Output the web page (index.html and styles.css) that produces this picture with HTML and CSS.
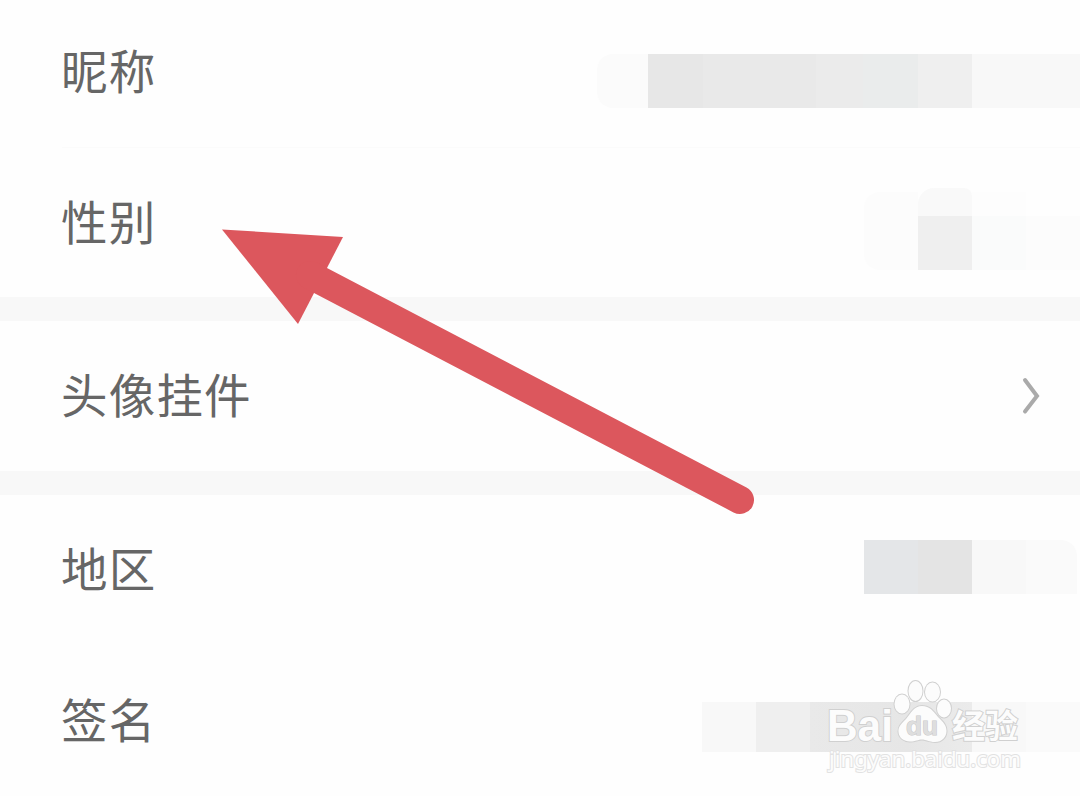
FILE: index.html
```html
<!DOCTYPE html>
<html lang="zh-CN">

<head>
  <meta charset="UTF-8" />
  <meta name="viewport" content="width=device-width, initial-scale=1.0" />
  <title>个人资料</title>
  <link rel="stylesheet" href="styles.css">
</head>

<body>
  <div class="profile">
    <div class="group">
      <div class="row row-nickname">
        <span class="label">昵称</span>
        <div class="mosaic">
          <i class="block edge wide"></i>
          <i class="block name"></i>
          <i class="block light"></i>
          <i class="block light"></i>
        </div>
      </div>
      <div class="row row-gender">
        <span class="label">性别</span>
        <div class="mosaic">
          <i class="block faint edge"></i>
          <i class="block gender"></i>
          <i class="block pale"></i>
          <i class="block paler"></i>
        </div>
      </div>
    </div>

    <div class="group">
      <div class="row row-pendant">
        <span class="label">头像挂件</span>
        <svg class="arrow" width="20" height="38" viewBox="0 0 20 38">
          <path d="M3 3 L15 19 L3 34.500" />
        </svg>
      </div>
    </div>

    <div class="group">
      <div class="row row-region">
        <span class="label">地区</span>
        <div class="mosaic">
          <i class="block blue"></i>
          <i class="block grey"></i>
          <i class="block light"></i>
          <i class="block soft"></i>
        </div>
      </div>
      <div class="row row-sign">
        <span class="label">签名</span>
        <div class="mosaic">
          <i class="block light"></i>
          <i class="block mid"></i>
          <i class="block sign"></i>
          <i class="block light"></i>
          <i class="block soft"></i>
        </div>
      </div>
    </div>
  </div>

  <!-- pointer to the gender row -->
  <svg class="pointer" width="1080" height="796" viewBox="0 0 1080 796">
    <path class="head" d="M222 229.500 L343 237 L298 324 Z" />
    <path class="shaft" d="M310 275 L740 500" />
  </svg>

  <!-- watermark -->
  <svg class="watermark" width="210" height="110" viewBox="820 675 210 110">
    <text class="logo" x="827" y="740.500" textLength="66" lengthAdjust="spacingAndGlyphs">Bai</text>
    <g class="paw">
      <ellipse cx="902" cy="704" rx="7.500" ry="9.500" />
      <ellipse cx="915.500" cy="691" rx="7" ry="10" />
      <ellipse cx="932.500" cy="692" rx="7.500" ry="9.500" />
      <ellipse cx="944" cy="708.500" rx="7" ry="9" />
      <path d="M922 706 C914 706 911 713 906 719 C901 724 898 727 898.500 732 C899 738 904 741.500 910 741.500 C916 741.500 918 739.500 922 739.500 C926 739.500 929 742 935 742 C942 742 946.500 737 946.500 731 C946.500 725 943 722 938 717 C933 711 930 706 922 706 Z" />
    </g>
    <text class="du" x="906" y="735" textLength="32" lengthAdjust="spacingAndGlyphs">du</text>
    <text class="cn" x="952" y="738" textLength="66">经验</text>
    <text class="site" x="829" y="767" textLength="192" lengthAdjust="spacingAndGlyphs">jingyan.baidu.com</text>
  </svg>
</body>

</html>
```

FILE: styles.css
```css
body,
div {
  margin: 0;
  padding: 0;
}

body {
  width: 1080px;
  height: 796px;
  overflow: hidden;
  background: #fefefe;
  font-family: "Noto Sans CJK SC", sans-serif;
}

.profile {
  display: flex;
  flex-direction: column;
  gap: 24px;
  background: #f8f8f8;
}

.group {
  background: #fefefe;
}

.row {
  display: flex;
  justify-content: space-between;
  align-items: flex-start;
  box-sizing: border-box;
  height: 150px;
  padding-left: 61px;
}

.row-nickname {
  height: 148px;
  background: linear-gradient(#fbfbfb, #fbfbfb) 62px 100% / 1018px 1px no-repeat;
}

.row-gender {
  height: 149px;
}

.row-region {
  height: 151px;
}

.label {
  margin-top: 38px;
  font-size: 46.5px;
  line-height: 68px;
  letter-spacing: 1.200px;
  color: #666;
}

.row-nickname .label {
  margin-top: 35px;
}

.arrow {
  margin: 56px 38px 0 0;
}

.arrow path {
  fill: none;
  stroke: #aaa;
  stroke-width: 4;
  stroke-linecap: round;
}

/* blurred values */
.mosaic {
  display: flex;
  align-items: flex-end;
  margin-top: 54px;
}

.row-gender .mosaic {
  margin-top: 40px;
}

.row-region .mosaic {
  margin-top: 45px;
}

.row-sign .mosaic {
  margin-top: 56px;
}

.block {
  width: 54px;
  height: 54px;
}

.edge {
  border-radius: 16px 0 0 16px;
  background: #fbfbfb;
}

.wide {
  width: 51px;
}

.name {
  width: 324px;
  background: linear-gradient(90deg, #e7e7e7 0 55px, #e9e9e9 55px 168px, #ebebeb 168px 215px, #eaecec 215px 270px, #efefef 270px);
}

.light {
  background: #f8f8f8;
}

.soft {
  background: #fafafa;
}

.faint {
  height: 78px;
  background: #fcfcfc;
}

.gender {
  height: 82px;
  border-radius: 16px 8px 0 0;
  background: linear-gradient(#f9f9f9 0 28px, #efefef 28px);
}

.pale {
  height: 78px;
  background: linear-gradient(#fdfdfd 0 24px, #fafbfb 24px);
}

.paler {
  background: #fcfcfc;
}

.blue {
  background: #e4e6e8;
}

.grey {
  background: #e4e4e4;
}

.row-region .soft {
  width: 51px;
  margin-right: 3px;
  border-radius: 0 16px 0 0;
}

.row-sign .block {
  height: 50px;
}

.mid {
  background: #efefef;
}

.sign {
  width: 162px;
  background: linear-gradient(90deg, #e9e9e9, #e6e6e6 60%, #ebebeb);
}

.pointer {
  position: absolute;
  top: 0;
  left: 0;
}

.head {
  fill: #dc575d;
}

.shaft {
  fill: none;
  stroke: #dc575d;
  stroke-width: 28;
  stroke-linecap: round;
}

.watermark {
  position: absolute;
  top: 675px;
  left: 820px;
}

.watermark text,
.paw {
  fill: #fcfcfc;
  stroke: #d0d0d0;
  stroke-width: 2px;
  paint-order: stroke;
}

.watermark .logo {
  font: bold 44px "Liberation Sans", sans-serif;
}

.watermark .du {
  font: bold 25px "Liberation Sans", sans-serif;
  fill: #dedede;
  stroke: #c8c8c8;
  stroke-width: 1px;
}

.watermark .cn {
  font: bold 33px "Noto Sans CJK SC", sans-serif;
}

.watermark .site {
  font: 22.5px "Noto Sans", sans-serif;
  stroke: #e2e2e2;
}
```
